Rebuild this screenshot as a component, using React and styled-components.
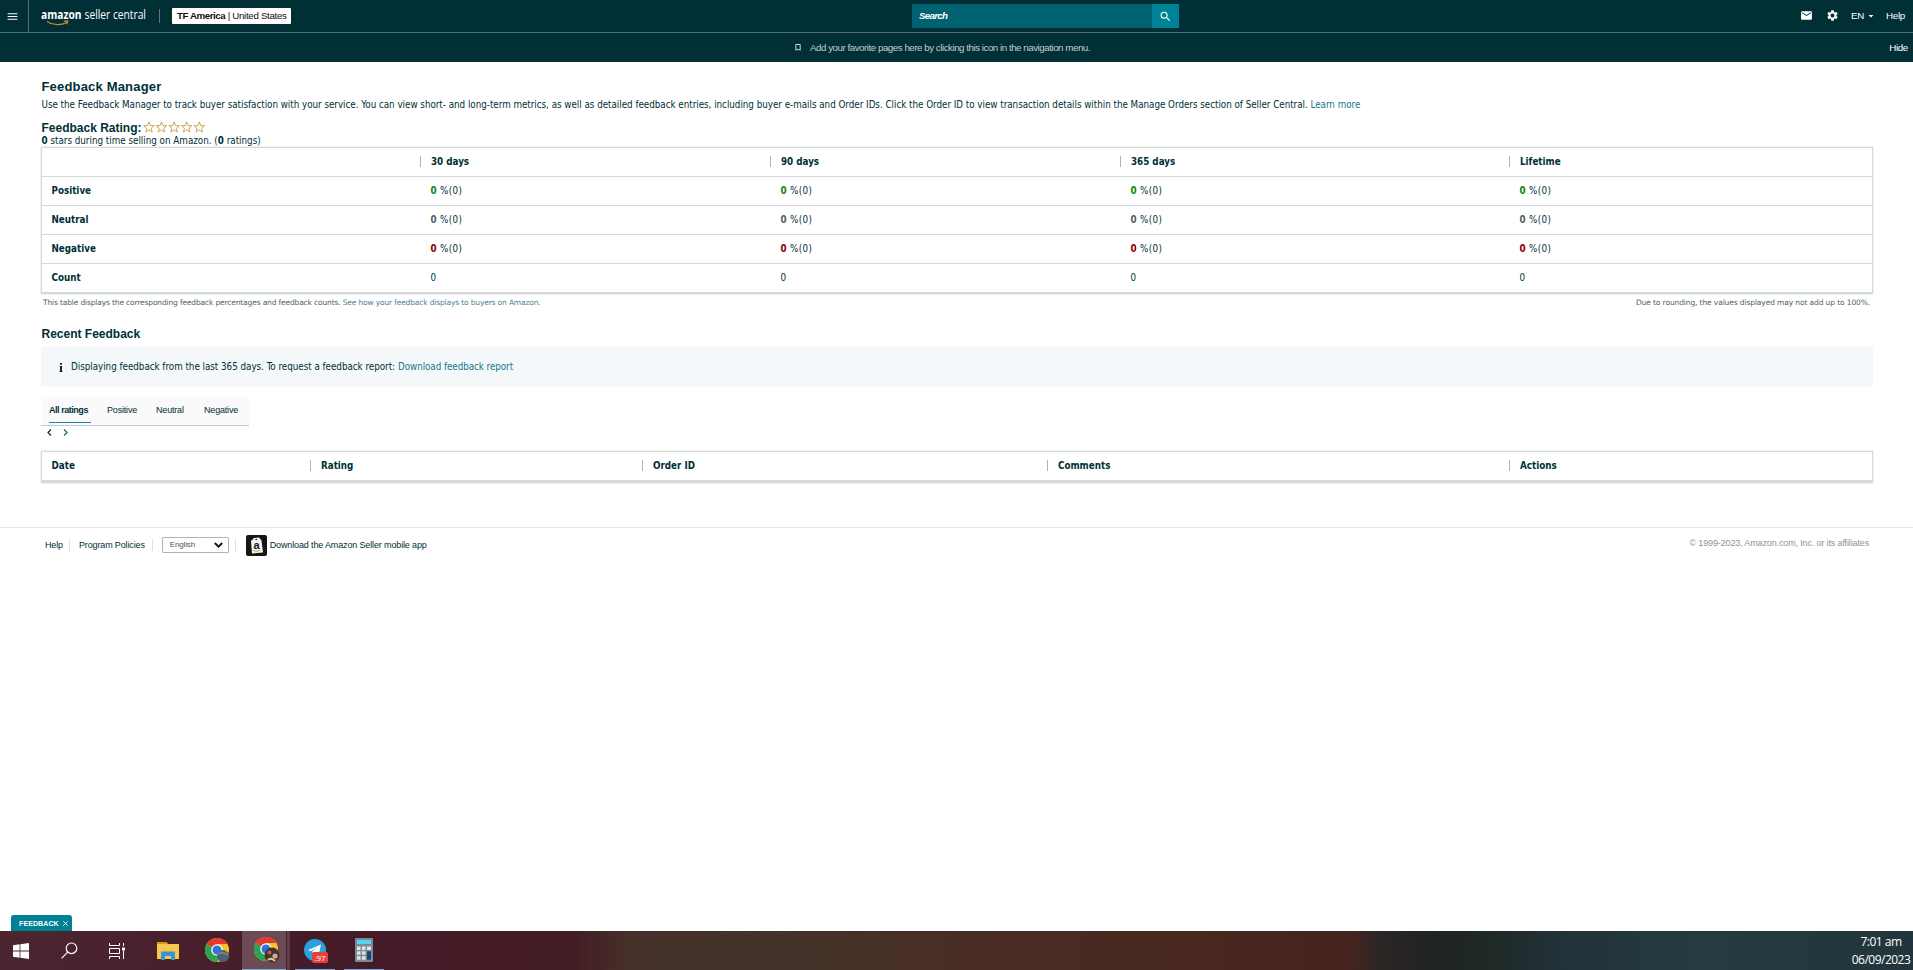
import React from "react";
import styled, { createGlobalStyle } from "styled-components";
import { MdMenu, MdSearch, MdEmail, MdSettings, MdArrowDropDown } from "react-icons/md";

const GlobalStyle = createGlobalStyle`
  * { box-sizing: border-box; }
  body { margin: 0; background: #fff; overflow: hidden; }
`;

const sans = `"Liberation Sans", Arial, sans-serif`;
const body = `"DejaVu Sans Condensed", "DejaVu Sans", Tahoma, sans-serif`;
const small = `"DejaVu Sans", Verdana, sans-serif`;

const Page = styled.div`
  display: flex;
  flex-direction: column;
  width: 1913px;
  height: 970px;
  color: #002f36;
  font: 9.75px/14px ${body};
  white-space: nowrap;
`;

/* ---------- header ---------- */
const TopBar = styled.header`
  display: grid;
  grid-template-columns: 912px 267px 1fr;
  height: 33px;
  background: #002f36;
  border-bottom: 1px solid #4d7074;
  color: #fff;
  font-family: ${sans};
`;
const BrandArea = styled.div`
  display: flex;
  align-items: center;
  height: 32px;
`;
const MenuButton = styled.div`
  display: flex;
  align-items: center;
  width: 29px;
  height: 32px;
  padding-left: 6px;
  border-right: 1px solid #4d7074;
`;
const Wordmark = styled.svg`
  margin-left: 12px;
  font-family: "Open Sans", "Noto Sans", sans-serif;
`;
const BrandDivider = styled.i`
  width: 1px;
  height: 14px;
  margin: 0 12px 0 11px;
  background: #55777b;
`;
const AccountBox = styled.div`
  width: 119px;
  height: 16px;
  padding-left: 5px;
  border-radius: 1px;
  background: #fff;
  color: #111;
  font-size: 9.75px;
  line-height: 16px;
  letter-spacing: -0.33px;
  b { letter-spacing: -0.44px; }
`;
const SearchBox = styled.div`
  display: flex;
  height: 24px;
  margin-top: 4px;
`;
const SearchField = styled.div`
  width: 240px;
  padding-left: 7px;
  background: #006170;
  font: italic 700 9.75px/24px ${sans};
  letter-spacing: -0.7px;
`;
const SearchButton = styled.div`
  display: flex;
  align-items: center;
  justify-content: center;
  width: 27px;
  background: #008296;
`;
const Tools = styled.nav`
  display: flex;
  align-items: center;
  justify-content: flex-end;
  height: 31px;
  padding-right: 8px;
  font-size: 9.75px;
  letter-spacing: -0.25px;
  svg { flex: none; }
`;
const MailSlot = styled.span`
  display: flex;
  margin-right: 13px;
`;
const GearSlot = styled.span`
  display: flex;
  margin-right: 12px;
`;
const CaretSlot = styled.span`
  display: flex;
  margin: 1px 9px 0 1px;
`;
const FavoritesBar = styled.div`
  display: flex;
  align-items: center;
  height: 29px;
  padding: 0 5px 0 795px;
  background: #002f36;
  color: #c0cdcf;
  font: 9.75px/29px ${sans};
  letter-spacing: -0.471px;
`;
const FavoritesHint = styled.span`
  flex: 1;
  margin-left: 9px;
`;
const HideLink = styled.span`
  color: #fff;
  letter-spacing: -0.3px;
`;

/* ---------- content ---------- */
const Content = styled.main`
  flex: 1;
  display: flex;
  flex-direction: column;
  padding-top: 16px;
`;
const Section = styled.section`
  display: flex;
  flex-direction: column;
  width: 1832px;
  margin-left: 41px;
`;
const PageTitle = styled.h1`
  margin: 0 0 0 0.5px;
  font: 700 13px/18px ${sans};
  letter-spacing: 0.18px;
`;
const Intro = styled.p`
  margin: 0 0 6px 0.5px;
  line-height: 17px;
  letter-spacing: -0.018px;
`;
const Link = styled.a`
  color: #17788a;
`;
const RatingLine = styled.div`
  display: flex;
  align-items: center;
  height: 16px;
  padding-top: 2px;
`;
const Heading = styled.h2`
  margin: 0 0 0 0.5px;
  font: 700 12px/17px ${sans};
`;
const Stars = styled.svg`
  margin: -3px 0 0 1.5px;
`;
const RatingSummary = styled.div`
  height: 12px;
  margin-left: 0.5px;
  line-height: 11px;
`;
const Table = styled.div`
  display: flex;
  flex-direction: column;
  border: 1px solid #d5d9d9;
  border-bottom-width: ${(p) => p.$foot || 2}px;
  box-shadow: 0 0 2px #d5dbdb;
`;
const Row = styled.div`
  display: grid;
  grid-template-columns: ${(p) => p.$columns};
  height: 29px;
  line-height: 27px;
  border-bottom: 1px solid #d5d9d9;
  &:last-child { height: 28px; border-bottom: 0; }
`;
const HeadCell = styled.div`
  display: flex;
  align-items: center;
  height: 26px;
  padding-left: ${(p) => (p.$first ? 9.5 : 0)}px;
  font-weight: 700;
  &::before {
    content: "";
    display: ${(p) => (p.$first ? "none" : "block")};
    width: 1px;
    height: 11px;
    margin-right: 10px;
    background: #aab7b8;
  }
`;
const Cell = styled.div`
  padding-left: ${(p) => (p.$first ? 9.5 : 10.5)}px;
  font-weight: ${(p) => (p.$first ? 700 : 400)};
  letter-spacing: ${(p) => (p.$first ? 0 : 0.35)}px;
`;
const tones = { positive: "#0a8a0a", neutral: "#555f61", negative: "#8b0000" };
const Score = styled.b`
  color: ${(p) => tones[p.$tone]};
`;
const Captions = styled.div`
  display: flex;
  justify-content: space-between;
  margin: 2px 3px 17px 2px;
  color: #4d6266;
  font: 7.5px/13px ${small};
  letter-spacing: -0.15px;
`;
const CaptionLink = styled.a`
  color: #4b7f91;
`;
const RoundingNote = styled.span`
  letter-spacing: -0.114px;
`;
const InfoBox = styled.div`
  display: flex;
  align-items: center;
  height: 40px;
  margin: 4px 0 9px;
  padding-left: 18px;
  background: #f4f8fa;
`;
const InfoText = styled.span`
  margin: -1px 3px 0 8px;
  letter-spacing: -0.02px;
`;
const InfoLink = styled(Link)`
  margin-top: -1px;
  letter-spacing: -0.05px;
`;
const Tabs = styled.div`
  display: flex;
  width: 208px;
  height: 30px;
  padding-left: 8px;
  background: #fafafa;
  border-bottom: 1px solid #c4c9c9;
  font: 9px/28px ${sans};
`;
const Tab = styled.div`
  width: ${(p) => p.$width}px;
  height: 27px;
  margin-right: ${(p) => p.$gap}px;
  border-bottom: ${(p) => (p.$active ? "1px solid #178a9c" : "0")};
  font-weight: ${(p) => (p.$active ? 700 : 400)};
  letter-spacing: ${(p) => (p.$active ? -0.46 : -0.18)}px;
`;
const Pager = styled.div`
  display: flex;
  align-items: center;
  gap: 11px;
  height: 13px;
  margin-bottom: 12px;
  padding-left: 6px;
`;

/* ---------- footer ---------- */
const Footer = styled.footer`
  display: flex;
  align-items: center;
  height: 35px;
  margin-top: 44px;
  padding: 0 44px 0 45px;
  border-top: 1px solid #e4e7e7;
  font: 9px/14px ${sans};
  letter-spacing: -0.14px;
`;
const FooterDivider = styled.i`
  width: 1px;
  height: 12px;
  margin: 0 ${(p) => p.$after}px 0 ${(p) => p.$before}px;
  background: #dde1e1;
`;
const LanguageSelect = styled.div`
  display: flex;
  align-items: center;
  justify-content: space-between;
  width: 67px;
  height: 16px;
  padding: 0 5px 0 7px;
  border: 1px solid #b3b3b3;
  border-radius: 1px;
  color: #555;
  font-size: 8px;
`;
const AppLink = styled.span`
  flex: 1;
  margin-left: 3px;
`;
const FooterLink = styled.span`
  margin-top: -1px;
`;
const Copyright = styled.span`
  margin-top: -5px;
  color: #8b9496;
`;
const FeedbackTab = styled.div`
  display: flex;
  align-items: center;
  justify-content: space-between;
  width: 61px;
  height: 16px;
  margin: auto 0 0 11px;
  padding: 0 4px 0 8px;
  border-radius: 3px 3px 0 0;
  background: #008296;
  color: #fff;
  font: 700 7px/17px ${sans};
  letter-spacing: 0.1px;
`;

/* ---------- taskbar ---------- */
const Taskbar = styled.div`
  display: flex;
  height: 39px;
  color: #fff;
  background: linear-gradient(90deg, #4c2530 0, #47202c 200px, #431a26 380px, #441c24 575px,
    #45302a 625px, #42332a 760px, #4a2c24 1000px, #48281f 1200px, #46241f 1350px,
    #2b2524 1378px, #1e2423 1440px, #1f2a28 1500px, #233239 1560px, #243c3f 1700px, #22353c 1913px);
`;
const Task = styled.div`
  display: flex;
  align-items: center;
  justify-content: center;
  width: ${(p) => p.$width}px;
  margin-right: ${(p) => p.$gap || 0}px;
  padding-left: ${(p) => (p.$active ? 6 : 0)}px;
  background: ${(p) => (p.$active ? "rgba(255,255,255,.2)" : "transparent")};
  border-bottom: ${(p) => (p.$open ? "1px solid #76a9dc" : "0")};
`;
const TileEdge = styled.i`
  width: 4px;
  background: rgba(255, 255, 255, 0.14);
  border-left: 1px solid rgba(20, 0, 8, 0.4);
  margin-right: 5px;
`;
const BadgeHost = styled.div`
  position: relative;
  display: flex;
`;
const CountBadge = styled.span`
  position: absolute;
  left: 8px;
  top: 13px;
  width: 16px;
  height: 11px;
  border-radius: 2px;
  background: #e8403f;
  font: 8px/11px "Open Sans", sans-serif;
  text-align: center;
`;
const Clock = styled.div`
  width: 62px;
  margin-left: auto;
  padding: 2px 2px 0 0;
  font: 12px/18px "Open Sans", "Noto Sans", sans-serif;
  letter-spacing: -0.52px;
  text-align: center;
`;

const days = ["30 days", "90 days", "365 days", "Lifetime"];
const metrics = [
  { label: "Positive", tone: "positive" },
  { label: "Neutral", tone: "neutral" },
  { label: "Negative", tone: "negative" },
];
const metricColumns = "378px 350px 350px 389px 1fr";
const feedbackColumns = "268px 332px 405px 462px 1fr";

function Logo() {
  return (
    <Wordmark width="107" height="24" viewBox="0 0 107 24" fill="#fff">
      <text transform="translate(0 15) scale(.82 1)" fontSize="12.5" fontWeight="700">amazon</text>
      <text transform="translate(43.500 15) scale(.82 1)" fontSize="12.5">seller central</text>
      <path d="M6 17.4c6 4.2 14 4.2 20 .8M22.8 17.2l4-.2-1 3.4" fill="none" stroke="#c9862b" strokeWidth="1.2" />
    </Wordmark>
  );
}

const starPath = "M6 .8 7.4 4.5l3.9.2-3 2.5 1 3.9L6 8.9l-3.3 2.2 1-3.9-3-2.5 3.9-.2z";

function ChromeIcon({ children }) {
  return (
    <svg width="26" height="26" viewBox="0 0 26 26">
      <circle cx="12" cy="12" r="12" fill="#fbc02d" />
      <path d="M12 12 1.6 6A12 12 0 0 0 12 24l5.2-9z" fill="#2fa24f" />
      <path d="M12 12 1.6 6A12 12 0 0 1 22.4 6H12z" fill="#e5392e" />
      <circle cx="12" cy="12" r="5.8" fill="#fff" />
      <circle cx="12" cy="12" r="4.5" fill="#2f74e0" />
      {children}
    </svg>
  );
}

export default function App() {
  return (
    <Page>
      <GlobalStyle />
      <TopBar>
        <BrandArea>
          <MenuButton><MdMenu size={13} /></MenuButton>
          <Logo />
          <BrandDivider />
          <AccountBox><b>TF America</b> | United States</AccountBox>
        </BrandArea>
        <SearchBox>
          <SearchField>Search</SearchField>
          <SearchButton><MdSearch size={13} /></SearchButton>
        </SearchBox>
        <Tools>
          <MailSlot><MdEmail size={13} /></MailSlot>
          <GearSlot><MdSettings size={13} /></GearSlot>
          EN
          <CaretSlot><MdArrowDropDown size={12} /></CaretSlot>
          Help
        </Tools>
      </TopBar>
      <FavoritesBar>
        <svg width="6" height="7" viewBox="0 0 6 7"><path d="M.8.5h4.400v5.700L3 5.200.8 6.200z" fill="none" stroke="#dfe6e7" strokeWidth=".9" /></svg>
        <FavoritesHint>Add your favorite pages here by clicking this icon in the navigation menu.</FavoritesHint>
        <HideLink>Hide</HideLink>
      </FavoritesBar>

      <Content>
        <Section>
          <PageTitle>Feedback Manager</PageTitle>
          <Intro>
            Use the Feedback Manager to track buyer satisfaction with your service. You can view short- and long-term
            metrics, as well as detailed feedback entries, including buyer e-mails and Order IDs. Click the Order ID to
            view transaction details within the Manage Orders section of Seller Central. <Link>Learn more</Link>
          </Intro>
          <RatingLine>
            <Heading>Feedback Rating:</Heading>
            <Stars width="63" height="12" viewBox="0 0 64 12" fill="none" stroke="#c99a3c" strokeWidth=".9">
              {[0, 12.8, 25.6, 38.4, 51.2].map((x) => <path key={x} d={starPath} transform={`translate(${x} 0)`} />)}
            </Stars>
          </RatingLine>
          <RatingSummary><b>0</b> stars during time selling on Amazon. (<b>0</b> ratings)</RatingSummary>

          <Table>
            <Row $columns={metricColumns}>
              <HeadCell $first />
              {days.map((d) => <HeadCell key={d}>{d}</HeadCell>)}
            </Row>
            {metrics.map((m) => (
              <Row key={m.label} $columns={metricColumns}>
                <Cell $first>{m.label}</Cell>
                {days.map((d) => <Cell key={d}><Score $tone={m.tone}>0</Score> %(0)</Cell>)}
              </Row>
            ))}
            <Row $columns={metricColumns}>
              <Cell $first>Count</Cell>
              {days.map((d) => <Cell key={d}>0</Cell>)}
            </Row>
          </Table>
          <Captions>
            <span>
              This table displays the corresponding feedback percentages and feedback counts.{" "}
              <CaptionLink>See how your feedback displays to buyers on Amazon.</CaptionLink>
            </span>
            <RoundingNote>Due to rounding, the values displayed may not add up to 100%.</RoundingNote>
          </Captions>

          <Heading>Recent Feedback</Heading>
          <InfoBox>
            <svg width="4" height="9" viewBox="0 0 4 9" fill="#002f36"><path d="M1 0h2v1.800H1zM.5 3H3v5.200h.7V9H.3v-.8H1V3.800H.5z" /></svg>
            <InfoText>Displaying feedback from the last 365 days. To request a feedback report:</InfoText>
            <InfoLink>Download feedback report</InfoLink>
          </InfoBox>
          <Tabs>
            <Tab $active $width={42} $gap={16}>All ratings</Tab>
            <Tab $width={30} $gap={19}>Positive</Tab>
            <Tab $width={28} $gap={20}>Neutral</Tab>
            <Tab $width={34} $gap={0}>Negative</Tab>
          </Tabs>
          <Pager>
            <svg width="5" height="7" viewBox="0 0 5 7"><path d="M4 .5 1 3.5l3 3" fill="none" stroke="#002f36" strokeWidth="1.2" /></svg>
            <svg width="5" height="7" viewBox="0 0 5 7"><path d="m1 .5 3 3-3 3" fill="none" stroke="#17627a" strokeWidth="1.2" /></svg>
          </Pager>
          <Table $foot={3}>
            <Row $columns={feedbackColumns}>
              <HeadCell $first>Date</HeadCell>
              {["Rating", "Order ID", "Comments", "Actions"].map((c) => <HeadCell key={c}>{c}</HeadCell>)}
            </Row>
          </Table>
        </Section>

        <Footer>
          <FooterLink>Help</FooterLink>
          <FooterDivider $before={6} $after={9} />
          <FooterLink>Program Policies</FooterLink>
          <FooterDivider $before={7} $after={9} />
          <LanguageSelect>
            English
            <svg width="9" height="6" viewBox="0 0 9 6"><path d="m.8 1 3.7 3.7L8.2 1" fill="none" stroke="#111" strokeWidth="1.8" /></svg>
          </LanguageSelect>
          <FooterDivider $before={6} $after={10} />
          <svg width="21" height="21" viewBox="0 0 21 21">
            <rect width="21" height="21" rx="2" fill="#151515" />
            <path d="m5 6 3-3 5-.5 2.500 3L17 17.500 6 18.500z" fill="#f3f3f0" />
            <circle cx="10.200" cy="4.500" r=".8" fill="#151515" />
            <text x="7.500" y="14" fontFamily="Liberation Sans" fontSize="11" fontWeight="700" fill="#151515">a</text>
            <path d="M7.500 15.700q3.500 1.500 7-.7" stroke="#d99a3a" fill="none" />
          </svg>
          <AppLink><FooterLink>Download the Amazon Seller mobile app</FooterLink></AppLink>
          <Copyright>© 1999-2023, Amazon.com, Inc. or its affiliates</Copyright>
        </Footer>

        <FeedbackTab>
          FEEDBACK
          <svg width="5" height="5" viewBox="0 0 5 5"><path d="m.3.3 4.400 4.400M4.700.3.3 4.700" stroke="#fff" strokeWidth=".9" /></svg>
        </FeedbackTab>
      </Content>

      <Taskbar>
        <Task $width={42}>
          <svg width="16" height="16" viewBox="0 0 16 16" fill="#fff"><path d="M0 2.200 6.600 1.300V7.600H0zM7.400 1.200 16 0v7.600H7.400zM0 8.400h6.600v6.300L0 13.800zM7.400 8.400H16V16l-8.600-1.200z" /></svg>
        </Task>
        <Task $width={54}>
          <svg width="17" height="17" viewBox="0 0 17 17" fill="none" stroke="#fff" strokeWidth="1.200"><circle cx="10.500" cy="6.300" r="5.300" /><path d="M6.700 10.200.6 16.300" /></svg>
        </Task>
        <Task $width={42}>
          <svg width="17" height="16" viewBox="0 0 17 16" fill="none" stroke="#fff"><path d="M.5 0v2.500h10V0M.5 16v-2.500h10V16M.5 5.500h10v5H.5zM14.500 0v3M14.500 8v8" /><path d="M13 4.500h3v3h-3z" fill="#fff" stroke="none" /></svg>
        </Task>
        <Task $width={60}>
          <svg width="22" height="19" viewBox="0 0 22 19"><path d="M0 1h9l2 2h11v15H0z" fill="#f7c94b" /><path d="M0 1h9l2 2H0z" fill="#d99a1c" /><path d="M4 19v-8.500h14V19h-4v-4H8v4z" fill="#3b93d0" /></svg>
        </Task>
        <Task $width={40}>
          <ChromeIcon><circle cx="18" cy="18" r="6" fill="#4d626c" /><path d="M13 16q5-3 10 1" stroke="#71838a" strokeWidth="2" fill="none" /></ChromeIcon>
        </Task>
        <Task $width={4} />
        <Task $width={44} $active $open>
          <ChromeIcon><circle cx="18" cy="18" r="7.500" fill="#4a3029" /><circle cx="15.500" cy="15.500" r="2" fill="#a36b4d" /><circle cx="21" cy="19" r="2.600" fill="#d5a595" /><path d="M14 23q3-3 7 1" stroke="#e3ca9b" strokeWidth="2" fill="none" /></ChromeIcon>
        </Task>
        <TileEdge />
        <Task $width={40} $gap={9} $open>
          <BadgeHost>
            <svg width="22" height="22" viewBox="0 0 22 22"><circle cx="11" cy="11" r="11" fill="#2ba0da" /><path d="m4 11 13-5.500-2.400 11.200-4-3-2 2-.3-3.500L14 7.800l-7.200 4.400z" fill="#fff" /></svg>
            <CountBadge>.97</CountBadge>
          </BadgeHost>
        </Task>
        <Task $width={40} $open>
          <svg width="18" height="24" viewBox="0 0 18 24">
            <rect width="18" height="24" rx="1" fill="#7d8a94" />
            <rect x="2" y="2" width="14" height="4" fill="#56d5ee" />
            <path d="M2 8.500h3.500v3.500H2zM7 8.500h3.500v3.500H7zM2 13.300h3.500v3.500H2zM7 13.300h3.500v3.500H7zM2 18.200h3.500v3.500H2zM7 18.200h3.500v3.500H7zM12 8.500h4v3.500h-4z" fill="#dfe6ea" />
            <path d="M12 13.300h4v8.400h-4z" fill="#12467e" />
          </svg>
        </Task>
        <Clock>7:01 am<br />06/09/2023</Clock>
      </Taskbar>
    </Page>
  );
}
